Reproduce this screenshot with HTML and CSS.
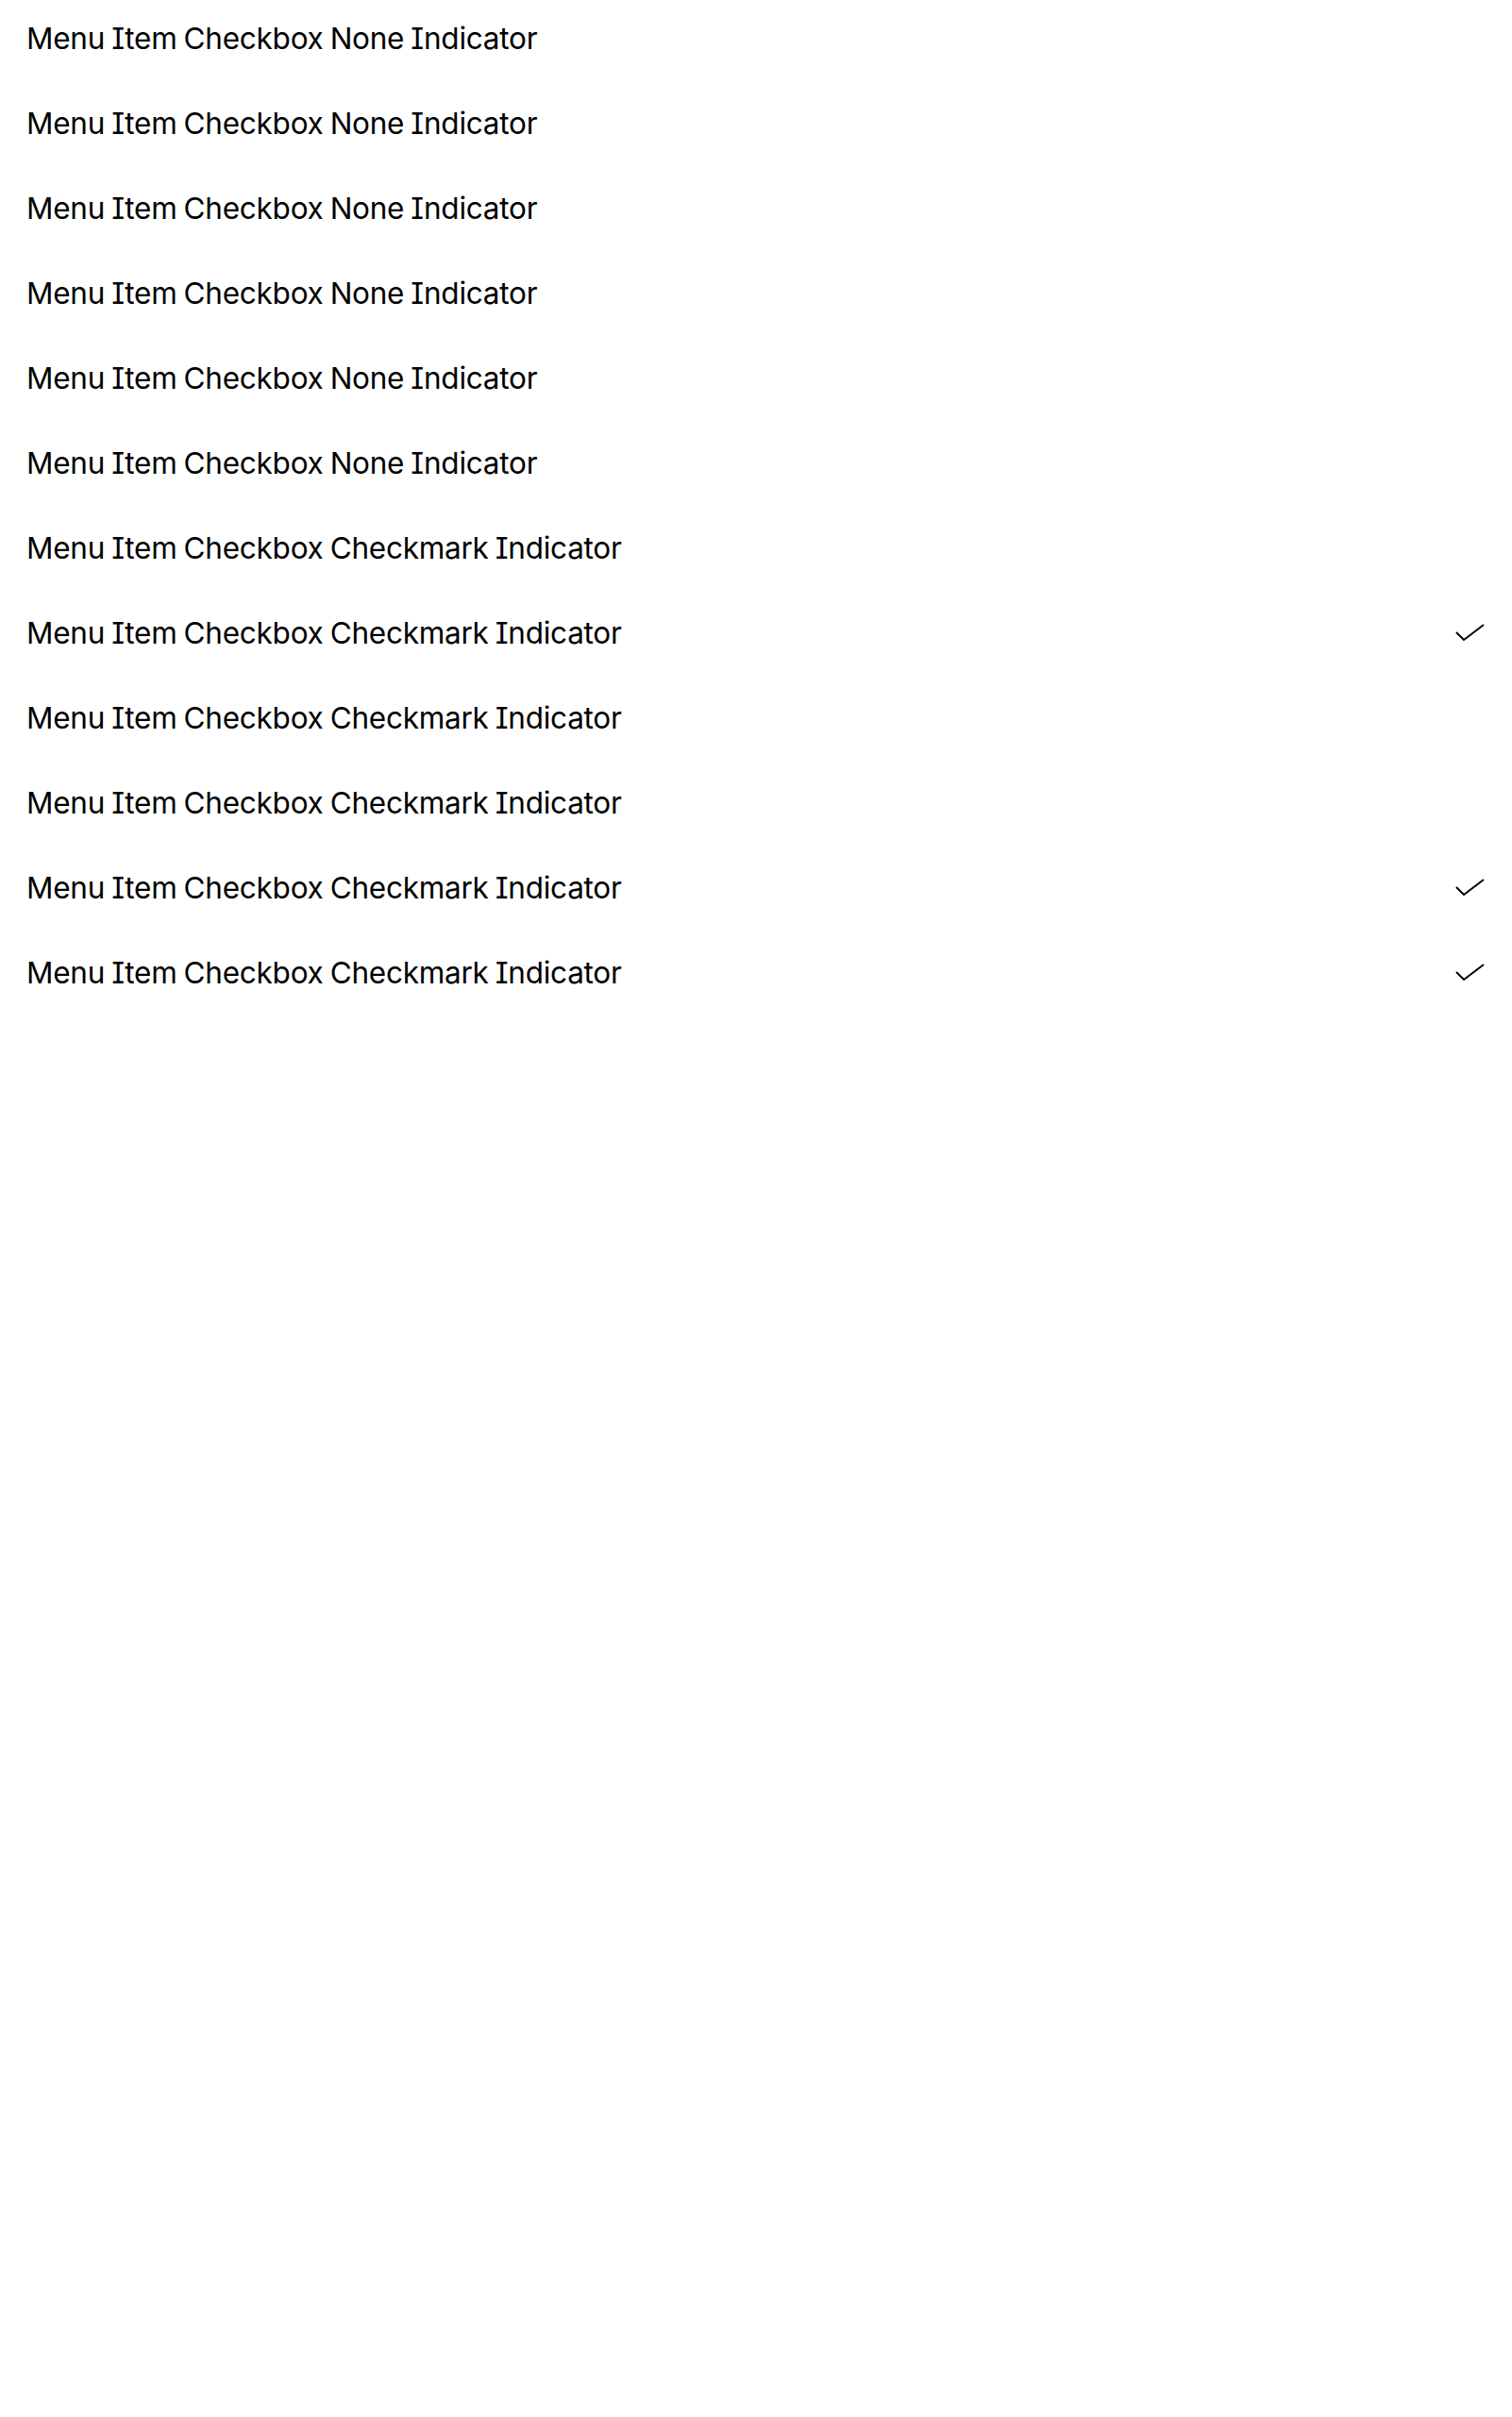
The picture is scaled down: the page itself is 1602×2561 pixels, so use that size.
FILE: index.html
```html
<!DOCTYPE html>
<html>
<head>
<meta charset="utf-8">
<link rel="stylesheet" href="styles.css">
</head>
<body>
<div class="menu">
  <div class="item"><span class="label">Menu Item Checkbox None Indicator</span></div>
  <div class="item"><span class="label">Menu Item Checkbox None Indicator</span></div>
  <div class="item"><span class="label">Menu Item Checkbox None Indicator</span></div>
  <div class="item"><span class="label">Menu Item Checkbox None Indicator</span></div>
  <div class="item"><span class="label">Menu Item Checkbox None Indicator</span></div>
  <div class="item"><span class="label">Menu Item Checkbox None Indicator</span></div>
  <div class="item"><span class="label">Menu Item Checkbox Checkmark Indicator</span></div>
  <div class="item"><span class="label">Menu Item Checkbox Checkmark Indicator</span><svg class="check" viewBox="0 0 32 32"><path d="M1 15 L9 23 L30 7"/></svg></div>
  <div class="item"><span class="label">Menu Item Checkbox Checkmark Indicator</span></div>
  <div class="item"><span class="label">Menu Item Checkbox Checkmark Indicator</span></div>
  <div class="item"><span class="label">Menu Item Checkbox Checkmark Indicator</span><svg class="check" viewBox="0 0 32 32"><path d="M1 15 L9 23 L30 7"/></svg></div>
  <div class="item"><span class="label">Menu Item Checkbox Checkmark Indicator</span><svg class="check" viewBox="0 0 32 32"><path d="M1 15 L9 23 L30 7"/></svg></div>
</div>
</body>
</html>
```
FILE: styles.css
```css
html, body {
  margin: 0;
  padding: 0;
  background: #fff;
}
body {
  font-family: Inter, "Noto Sans", sans-serif;
  color: #000;
}
.menu {
  display: flex;
  flex-direction: column;
}
.item {
  height: 90px;
  display: flex;
  align-items: center;
  justify-content: space-between;
  padding: 0 28px 9px 28px;
  box-sizing: border-box;
}
.label {
  font-size: 31.5px;
  line-height: 1;
  letter-spacing: -0.25px;
  word-spacing: -1.5px;
  font-feature-settings: "cv08" 1;
}
.check {
  width: 32px;
  height: 32px;
  fill: none;
  stroke: #000;
  stroke-width: 2;
}
```
